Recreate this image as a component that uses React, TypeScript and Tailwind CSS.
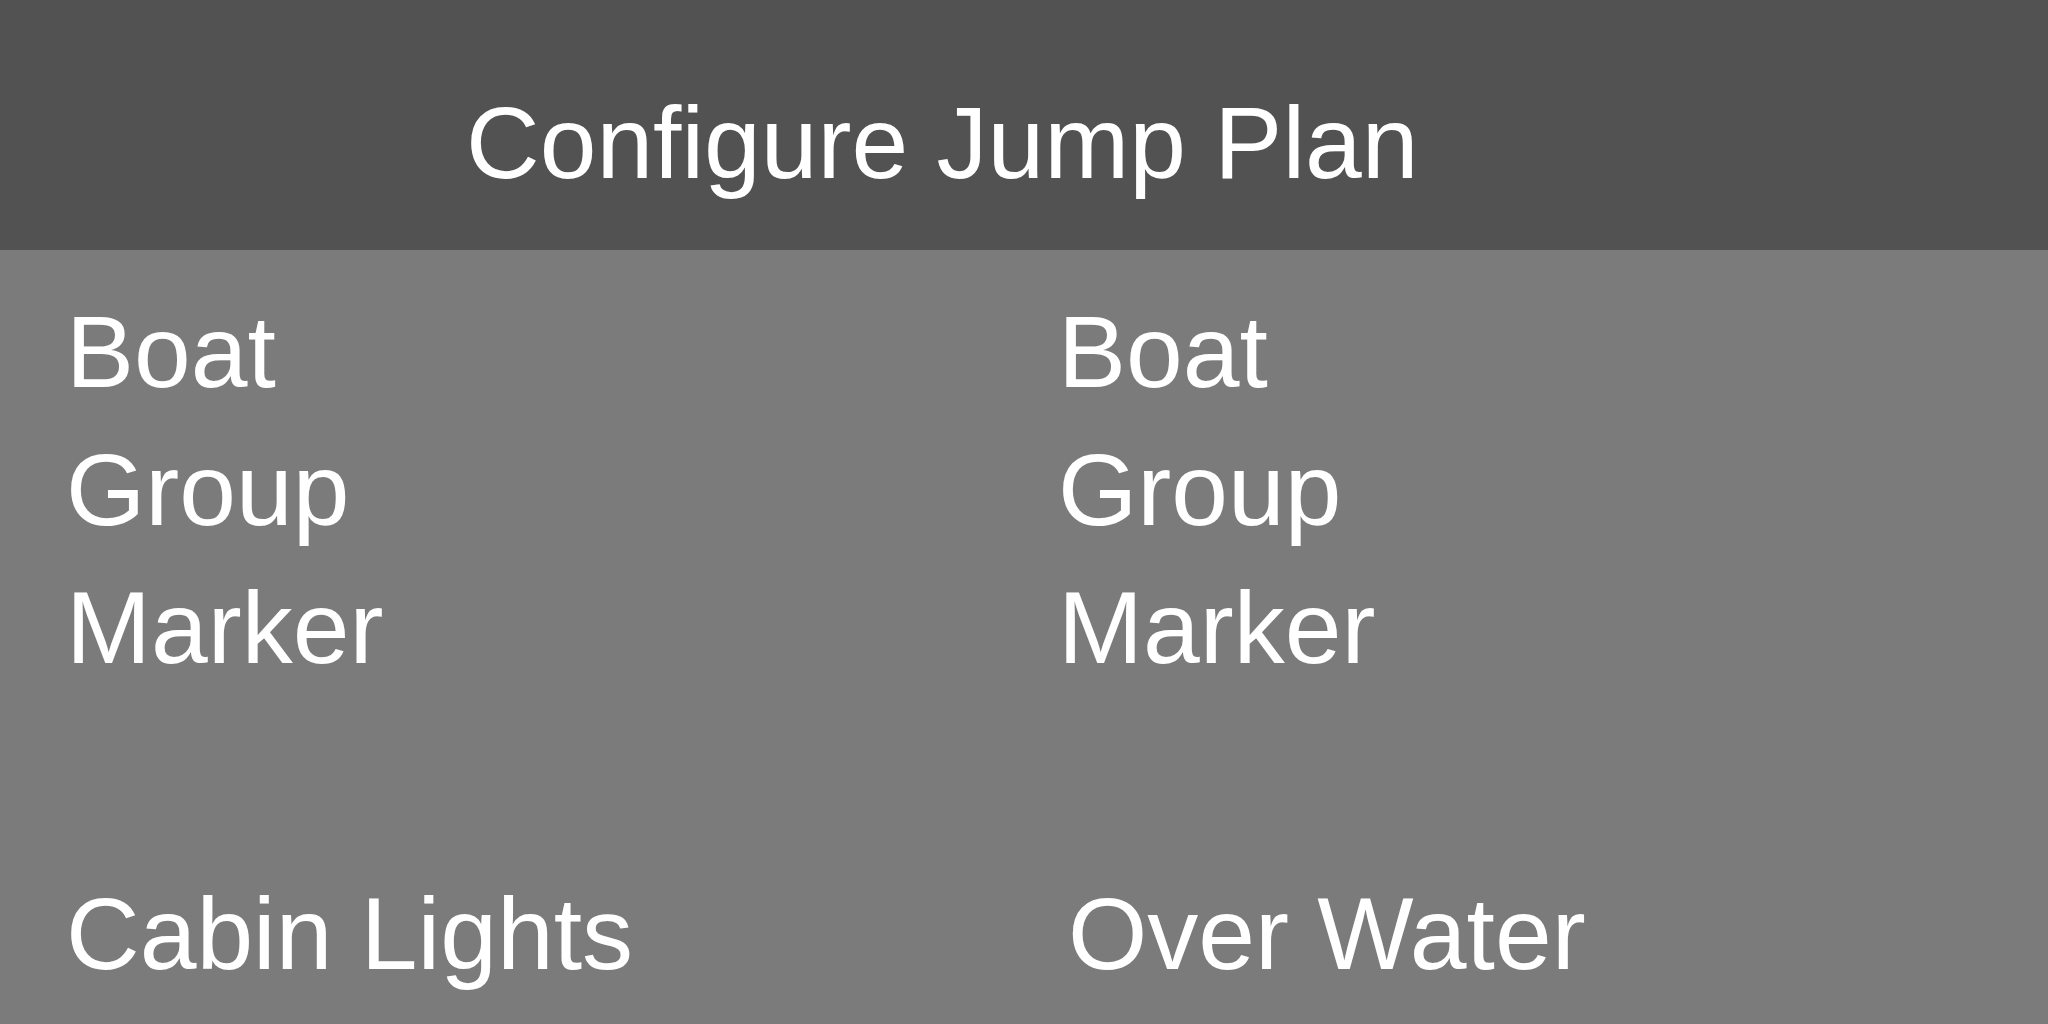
export default function App() {
  const rows = ["Boat", "Group", "Marker"];

  return (
    <div
      className="flex flex-col h-screen w-full bg-[#7b7b7b] text-white"
      style={{ fontFamily: '"Liberation Sans", Arial, sans-serif' }}
    >
      {/* Header */}
      <header className="h-[250px] shrink-0 bg-[#525252] pt-[74px] pl-[466px]">
        <h1 className="text-[102px] leading-[138px] font-normal whitespace-nowrap">Configure Jump Plan</h1>
      </header>

      {/* Body */}
      <main className="flex-1 grid grid-cols-[992px_1fr] pt-[33px] pl-[66px]">
        <div className="flex flex-col">
          {rows.map((r) => (
            <div key={r} className="text-[102px] leading-[138px] whitespace-nowrap">{r}</div>
          ))}
          <div className="mt-[168px] text-[102px] leading-[138px] whitespace-nowrap">Cabin Lights</div>
        </div>
        <div className="flex flex-col">
          {rows.map((r) => (
            <div key={r} className="text-[102px] leading-[138px] whitespace-nowrap">{r}</div>
          ))}
          <div className="mt-[168px] pl-[10px] text-[102px] leading-[138px] whitespace-nowrap">Over Water</div>
        </div>
      </main>
    </div>
  );
}
